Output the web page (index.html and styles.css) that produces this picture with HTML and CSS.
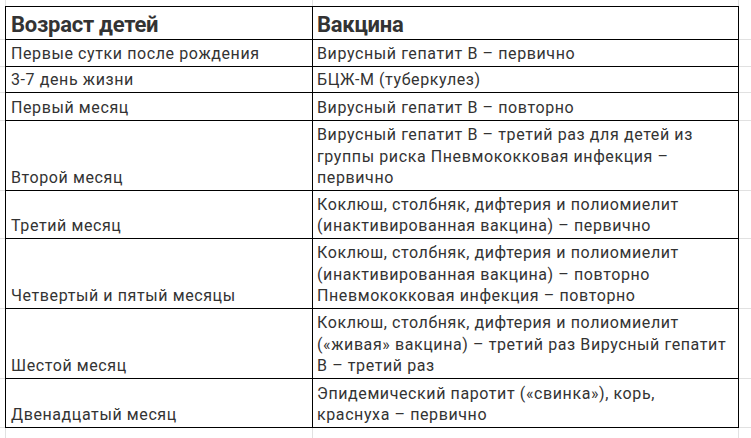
FILE: index.html
```html
<!DOCTYPE html>
<html lang="ru">
<head>
<meta charset="utf-8">
<title>Календарь прививок</title>
<link rel="stylesheet" href="styles.css">
</head>
<body>
<div class="sheet">
  <div class="gap"></div><div class="stub c1"></div><div class="stub c2"></div><div class="gap"></div>

  <div class="side"></div><div class="cell c1 hd">Возраст детей</div><div class="cell c2 hd">Вакцина</div><div class="side"></div>

  <div class="side"></div><div class="cell c1">Первые сутки после рождения</div><div class="cell c2">Вирусный гепатит В – первично</div><div class="side"></div>

  <div class="side"></div><div class="cell c1">3-7 день жизни</div><div class="cell c2">БЦЖ-М (туберкулез)</div><div class="side"></div>

  <div class="side"></div><div class="cell c1">Первый месяц</div><div class="cell c2">Вирусный гепатит В – повторно</div><div class="side"></div>

  <div class="side"></div><div class="cell c1">Второй месяц</div><div class="cell c2">Вирусный гепатит В – третий раз для детей из<br>группы риска Пневмококковая инфекция –<br>первично</div><div class="side"></div>

  <div class="side"></div><div class="cell c1">Третий месяц</div><div class="cell c2">Коклюш, столбняк, дифтерия и полиомиелит<br>(инактивированная вакцина) – первично</div><div class="side"></div>

  <div class="side"></div><div class="cell c1">Четвертый и пятый месяцы</div><div class="cell c2">Коклюш, столбняк, дифтерия и полиомиелит<br>(инактивированная вакцина) – повторно<br>Пневмококковая инфекция – повторно</div><div class="side"></div>

  <div class="side"></div><div class="cell c1">Шестой месяц</div><div class="cell c2">Коклюш, столбняк, дифтерия и полиомиелит<br>(«живая» вакцина) – третий раз Вирусный гепатит<br>В – третий раз</div><div class="side"></div>

  <div class="side"></div><div class="cell c1">Двенадцатый месяц</div><div class="cell c2">Эпидемический паротит («свинка»), корь,<br>краснуха – первично</div><div class="side"></div>

  <div class="gap"></div><div class="stub c1"></div><div class="stub c2"></div><div class="gap"></div>
</div>
</body>
</html>
```
FILE: styles.css
```css
* { box-sizing: border-box; }

html, body {
  margin: 0;
  background: #ffffff;
}

.sheet {
  display: grid;
  grid-template-columns: 5px 308px 426px 1fr;
  grid-template-rows: 6px 34px 27px 26px 28px 70px 48px 70px 70px 49px 1fr;
  height: 438px;
  font-family: Roboto, "Noto Sans", sans-serif;
  color: #333333;
}

.side {
  border-bottom: 1px solid #e1e1e1;
}

.stub.c1 {
  border-left: 1px solid #e1e1e1;
  border-right: 1px solid #e1e1e1;
}

.stub.c2 {
  border-right: 1px solid #e1e1e1;
}

.cell {
  display: flex;
  align-items: flex-end;
  border-bottom: 1px solid #000000;
  border-right: 1px solid #000000;
  font-size: 16px;
  line-height: 21.7px;
  letter-spacing: 0.6px;
  white-space: nowrap;
  padding: 0 2px 1px 4px;
}

.cell.c1 {
  border-left: 1px solid #000000;
  padding-left: 5px;
}

.cell.hd {
  border-top: 1px solid #000000;
  font-size: 22px;
  font-weight: 700;
  line-height: 26px;
  letter-spacing: -0.25px;
  padding-bottom: 1.5px;
}
```
